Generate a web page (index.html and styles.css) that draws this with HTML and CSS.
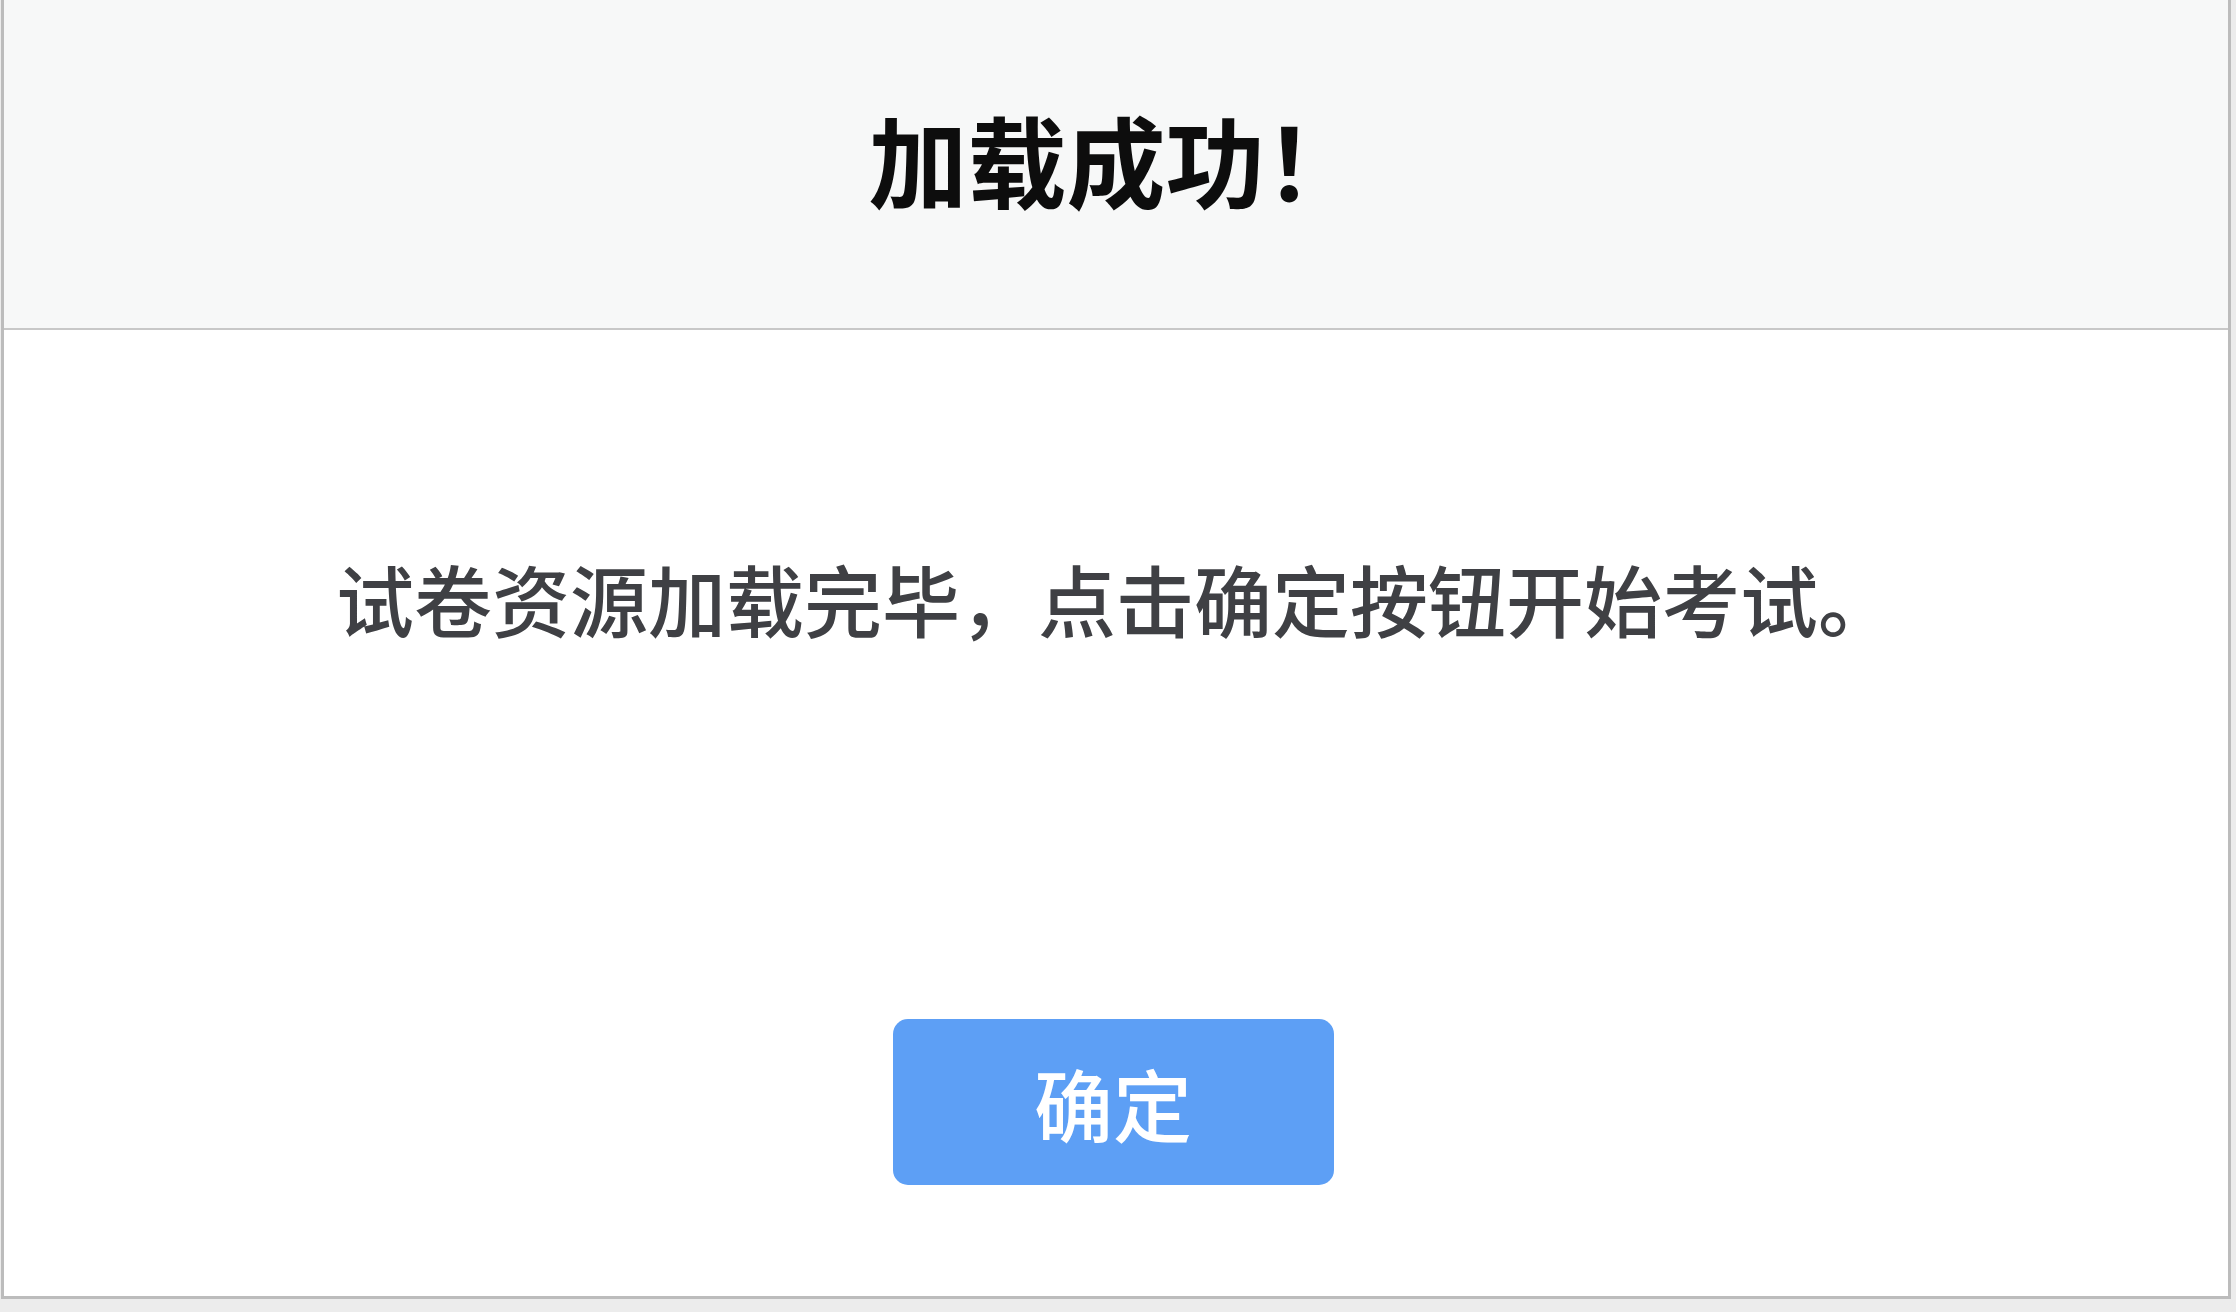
FILE: index.html
```html
<!DOCTYPE html>
<html lang="zh-CN">
<head>
    <meta charset="UTF-8">
    <meta name="viewport" content="width=device-width, initial-scale=1.0">
    <title>加载成功</title>
    <link rel="stylesheet" href="styles.css">
</head>
<body>
    <div class="dialog">
        <div class="dialog-header">
            <h1>加载成功！</h1>
        </div>
        <div class="dialog-body">
            <p class="message">试卷资源加载完毕，点击确定按钮开始考试。</p>
            <button type="button" class="btn-ok">确定</button>
        </div>
    </div>
</body>
</html>
```

FILE: styles.css
```css
html, body {
    height: 100%;
}
body {
    margin: 0;
    background-color: #ececec;
    font-family: "Noto Sans CJK SC", "Noto Sans", sans-serif;
}
.dialog {
    box-sizing: border-box;
    height: 1299px;
    margin: 0 5px 0 1px;
    background-color: #fff;
    border: 3px solid #bcbcbc;
    border-top: none;
    display: flex;
    flex-direction: column;
}
.dialog-header {
    height: 330px;
    flex-shrink: 0;
    box-sizing: border-box;
    padding-bottom: 12px;
    background-color: #f7f8f8;
    border-bottom: 2px solid #c8c8c8;
    display: flex;
    justify-content: center;
    align-items: center;
}
h1 {
    margin: 0;
    font-size: 99px;
    font-weight: 700;
    color: #0d0d0d;
    line-height: 1;
}
.dialog-body {
    flex: 1;
    display: flex;
    flex-direction: column;
    align-items: center;
    padding-top: 218px;
}
.message {
    margin: 0;
    font-size: 78px;
    font-weight: 500;
    line-height: 100px;
    color: #3f4044;
}
.btn-ok {
    margin-top: 371px;
    width: 441px;
    height: 166px;
    background-color: #5d9ff5;
    color: #fff;
    border: none;
    border-radius: 15px;
    font-family: inherit;
    font-size: 79px;
    font-weight: 500;
    cursor: pointer;
    margin-right: 6px;
}
```
